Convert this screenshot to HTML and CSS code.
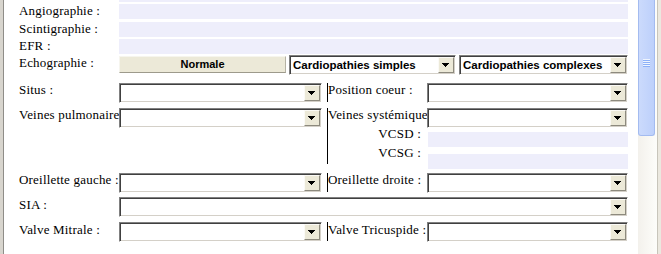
FILE: index.html
```html
<!DOCTYPE html>
<html>
<head>
<meta charset="utf-8">
<link rel="stylesheet" href="styles.css">
</head>
<body>
<div class="window">
  <div class="lframe"></div>
  <div class="content">
    <div class="strip"></div>
    <div class="row r-angio"><span class="lbl">Angiographie :</span><div class="box full"></div></div>
    <div class="row r-scinti"><span class="lbl">Scintigraphie :</span><div class="box full"></div></div>
    <div class="row r-efr"><span class="lbl">EFR :</span><div class="box full"></div></div>
    <div class="row r-echo">
      <span class="lbl lbl-echo">Echographie :</span>
      <div class="btn">Normale</div>
      <div class="combo c-simple"><span class="ctext">Cardiopathies simples</span><span class="arrow"><svg width="14" height="14" viewBox="0 0 14 14"><path d="M3 5h7v1H3zM4 6h5v1H4zM5 7h3v1H5zM6 8h1v1H6z" fill="#000"/></svg></span></div>
      <div class="combo c-complex"><span class="ctext">Cardiopathies complexes</span><span class="arrow"><svg width="14" height="14" viewBox="0 0 14 14"><path d="M3 5h7v1H3zM4 6h5v1H4zM5 7h3v1H5zM6 8h1v1H6z" fill="#000"/></svg></span></div>
    </div>
    <div class="row r-situs">
      <span class="lbl">Situs :</span>
      <div class="combo half"><span class="ctext"></span><span class="arrow"><svg width="14" height="14" viewBox="0 0 14 14"><path d="M3 5h7v1H3zM4 6h5v1H4zM5 7h3v1H5zM6 8h1v1H6z" fill="#000"/></svg></span></div>
      <div class="vline short"></div>
      <span class="lbl lbl2">Position coeur :</span>
      <div class="combo rhalf"><span class="ctext"></span><span class="arrow"><svg width="14" height="14" viewBox="0 0 14 14"><path d="M3 5h7v1H3zM4 6h5v1H4zM5 7h3v1H5zM6 8h1v1H6z" fill="#000"/></svg></span></div>
    </div>
    <div class="row r-veines">
      <span class="lbl">Veines pulmonaires :</span>
      <div class="combo half"><span class="ctext"></span><span class="arrow"><svg width="14" height="14" viewBox="0 0 14 14"><path d="M3 5h7v1H3zM4 6h5v1H4zM5 7h3v1H5zM6 8h1v1H6z" fill="#000"/></svg></span></div>
      <div class="vline tall"></div>
      <div class="rgroup">
        <div class="subrow">
          <span class="lbl lbl2">Veines systémiques :</span>
          <div class="combo rhalf"><span class="ctext"></span><span class="arrow"><svg width="14" height="14" viewBox="0 0 14 14"><path d="M3 5h7v1H3zM4 6h5v1H4zM5 7h3v1H5zM6 8h1v1H6z" fill="#000"/></svg></span></div>
        </div>
        <div class="subrow sub-vcsd">
          <span class="lbl lbl2 lbl-r">VCSD :</span>
          <div class="box rbox"></div>
        </div>
        <div class="subrow sub-vcsg">
          <span class="lbl lbl2 lbl-r">VCSG :</span>
          <div class="box rbox"></div>
        </div>
      </div>
    </div>
    <div class="row r-og">
      <span class="lbl">Oreillette gauche :</span>
      <div class="combo half"><span class="ctext"></span><span class="arrow"><svg width="14" height="14" viewBox="0 0 14 14"><path d="M3 5h7v1H3zM4 6h5v1H4zM5 7h3v1H5zM6 8h1v1H6z" fill="#000"/></svg></span></div>
      <div class="vline short"></div>
      <span class="lbl lbl2">Oreillette droite :</span>
      <div class="combo rhalf"><span class="ctext"></span><span class="arrow"><svg width="14" height="14" viewBox="0 0 14 14"><path d="M3 5h7v1H3zM4 6h5v1H4zM5 7h3v1H5zM6 8h1v1H6z" fill="#000"/></svg></span></div>
    </div>
    <div class="row r-sia">
      <span class="lbl lbl-low">SIA :</span>
      <div class="combo full"><span class="ctext"></span><span class="arrow"><svg width="14" height="14" viewBox="0 0 14 14"><path d="M3 5h7v1H3zM4 6h5v1H4zM5 7h3v1H5zM6 8h1v1H6z" fill="#000"/></svg></span></div>
    </div>
    <div class="row r-valve">
      <span class="lbl lbl-low">Valve Mitrale :</span>
      <div class="combo half"><span class="ctext"></span><span class="arrow"><svg width="14" height="14" viewBox="0 0 14 14"><path d="M3 5h7v1H3zM4 6h5v1H4zM5 7h3v1H5zM6 8h1v1H6z" fill="#000"/></svg></span></div>
      <div class="vline short"></div>
      <span class="lbl lbl2 lbl-low">Valve Tricuspide :</span>
      <div class="combo rhalf"><span class="ctext"></span><span class="arrow"><svg width="14" height="14" viewBox="0 0 14 14"><path d="M3 5h7v1H3zM4 6h5v1H4zM5 7h3v1H5zM6 8h1v1H6z" fill="#000"/></svg></span></div>
    </div>
  </div>
  <div class="scroll">
    <div class="thumb"><div class="grip"><i></i><i></i><i></i><i></i></div></div>
  </div>
  <div class="rframe"></div>
</div>
</body>
</html>
```
FILE: styles.css
```css
html, body {
  margin: 0;
  padding: 0;
  background: #fff;
}
body {
  width: 661px;
  height: 254px;
  overflow: hidden;
}
.window {
  display: flex;
  height: 254px;
}
.lframe {
  width: 3px;
  flex: none;
  background: #d8d5ce;
  border-right: 1px solid #8f8d88;
}
.content {
  width: 634px;
  flex: none;
  padding-left: 15px;
  box-sizing: border-box;
}
.strip {
  margin-left: 100px;
  width: 509px;
  height: 2px;
  background: #eeeefb;
  margin-bottom: 2px;
}
.row {
  display: flex;
  align-items: flex-start;
}
.lbl {
  width: 100px;
  flex: none;
  font-family: "Liberation Serif", "Times New Roman", serif;
  font-size: 13px;
  letter-spacing: 0.2px;
  line-height: 14px;
  color: #000;
  white-space: nowrap;
  overflow: hidden;
}
.lbl2 {
  width: 99px;
}
.lbl-r {
  text-align: right;
  padding-right: 6px;
  box-sizing: border-box;
}
.lbl-echo {
  margin-top: 1px;
}
.lbl-low {
  margin-top: 1px;
}
.box {
  background: #eeeefb;
  height: 15px;
}
.box.full {
  width: 509px;
}
.r-angio { height: 18px; }
.r-scinti { height: 17px; }
.r-efr { height: 16px; }
.r-echo { height: 28px; }
.r-situs { height: 25px; }
.r-veines { height: 65px; }
.r-og { height: 24px; }
.r-sia { height: 25px; }
.r-valve { height: 30px; }

.btn {
  width: 167px;
  height: 17px;
  margin-top: 1px;
  margin-right: 3px;
  box-sizing: border-box;
  background: #ece9d8;
  border-top: 1px solid #f6f5ee;
  border-left: 1px solid #f6f5ee;
  border-bottom: 1px solid #9d9a8c;
  border-right: 1px solid #b5b2a4;
  font-family: "Liberation Sans", Arial, sans-serif;
  font-weight: bold;
  font-size: 11px;
  line-height: 15px;
  text-align: center;
  color: #000;
}
.combo {
  display: flex;
  align-items: center;
  height: 20px;
  box-sizing: border-box;
  background: #fff;
  border: 1px solid;
  border-color: #808080 #fff #fff #808080;
  box-shadow: inset 1px 1px 0 #404040, inset -1px -1px 0 #d4d0c8;
  padding: 1px 1px 1px 2px;
  flex: none;
}
.ctext {
  flex: 1;
  font-family: "Liberation Sans", Arial, sans-serif;
  font-weight: bold;
  font-size: 11.5px;
  line-height: 16px;
  white-space: nowrap;
  overflow: hidden;
  color: #000;
  padding-left: 1px;
}
.arrow {
  width: 16px;
  height: 16px;
  flex: none;
  box-sizing: border-box;
  background: #ece9d8;
  border-top: 1px solid #fbfaf6;
  border-left: 1px solid #fbfaf6;
  border-bottom: 1px solid #8d8a7e;
  border-right: 1px solid #8d8a7e;
  display: flex;
}
.arrow svg {
  display: block;
  shape-rendering: crispEdges;
}
.c-simple {
  width: 167px;
  margin-right: 3px;
}
.c-complex {
  width: 169px;
}
.half {
  width: 203px;
  margin-right: 5px;
}
.rhalf {
  width: 201px;
}
.combo.full {
  width: 509px;
}
.vline {
  width: 1px;
  flex: none;
  background: #000;
}
.vline.short {
  height: 19px;
  margin-top: 0;
}
.vline.tall {
  height: 56px;
}
.rgroup {
  display: flex;
  flex-direction: column;
}
.subrow {
  display: flex;
  align-items: flex-start;
}
.sub-vcsd {
  height: 19px;
  margin-top: -1px;
}
.sub-vcsd .box {
  margin-top: 5px;
}
.sub-vcsg {
  height: 25px;
  margin-top: 0;
}
.sub-vcsg .box {
  margin-top: 8px;
}
.rbox {
  width: 200px;
  margin-left: 1px;
}

.scroll {
  width: 19px;
  flex: none;
  box-sizing: border-box;
  padding-right: 2px;
  background: linear-gradient(to right, #f3f1ec, #fdfdfa);
}
.thumb {
  height: 136px;
  box-sizing: border-box;
  background: linear-gradient(to right, #cbdafc, #bdd0fb);
  border: 1px solid #a3bbf0;
  border-top: none;
  border-radius: 0 0 3px 3px;
  display: flex;
  justify-content: center;
  padding-top: 59px;
}
.grip {
  width: 7px;
  display: flex;
  flex-direction: column;
}
.grip i {
  display: block;
  height: 1px;
  margin-bottom: 1px;
  background: #eef4fe;
  box-shadow: 0 1px 0 #8cb0f8;
}
.rframe {
  flex: 1;
  background: #ebe8df;
  border-left: 1px solid #c8c5bb;
}
```
